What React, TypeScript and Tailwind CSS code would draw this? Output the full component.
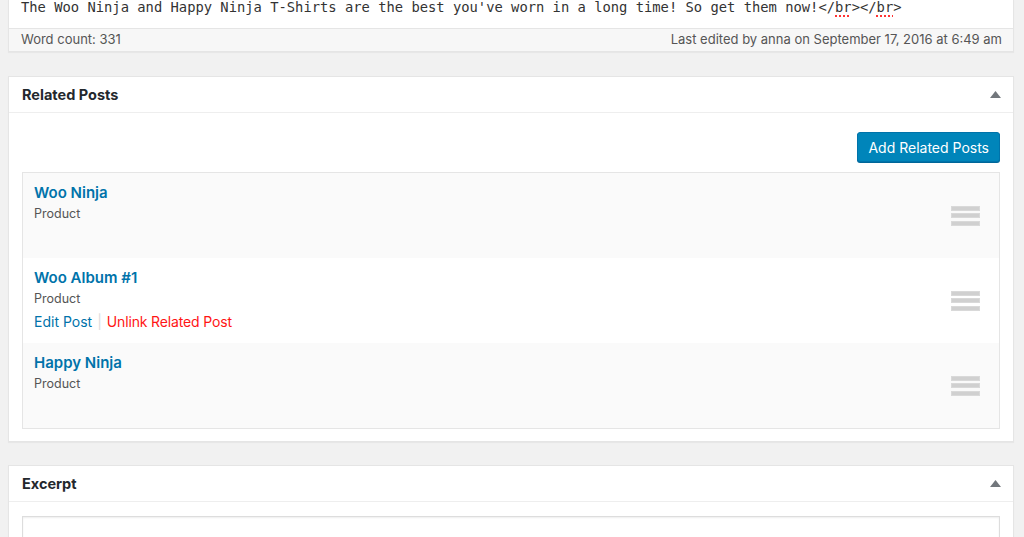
const sans = "font-['Inter','Noto_Sans',sans-serif]";

type Related = { title: string; type: string; actions?: boolean; shaded: boolean };

const posts: Related[] = [
  { title: "Woo Ninja", type: "Product", shaded: true },
  { title: "Woo Album #1", type: "Product", actions: true, shaded: false },
  { title: "Happy Ninja", type: "Product", shaded: true },
];

function Toggle() {
  return (
    <svg width="11" height="7" viewBox="0 0 11 7" className="text-[#72777c]">
      <path d="M0 7 L5.5 0 L11 7 Z" fill="currentColor" />
    </svg>
  );
}

function DragHandle() {
  return (
    <div className="flex w-[29px] flex-col gap-[2.5px]">
      <div className="h-[5px] border border-[#d9d9d9] bg-[#d0d0d0]" />
      <div className="h-[5px] border border-[#d9d9d9] bg-[#d0d0d0]" />
      <div className="h-[5px] border border-[#d9d9d9] bg-[#d0d0d0]" />
    </div>
  );
}

function BoxHeader({ title }: { title: string }) {
  return (
    <div className="flex h-[36px] items-center justify-between border-b border-[#eeeeee] pl-[13px] pr-[12px]">
      <h2 className="text-[14.5px] font-bold text-[#23282d]">{title}</h2>
      <Toggle />
    </div>
  );
}

export default function App() {
  return (
    <div className={`min-h-screen bg-[#f1f1f1] pl-[8px] pr-[10px] ${sans}`}>
      {/* Editor tail */}
      <div className="border-x border-b border-[#e5e5e5] bg-white shadow-[0_1px_1px_rgba(0,0,0,0.04)]">
        <div className="h-[28px] pl-[12px] font-['DejaVu_Sans_Mono',monospace] text-[13.8px] leading-[15px] text-[#333]">
          The Woo Ninja and Happy Ninja T-Shirts are the best you've worn in a long time! So get them now!&lt;/
          <span className="underline decoration-[#f33] decoration-dotted decoration-2 underline-offset-[3px]">br</span>
          &gt;&lt;/
          <span className="underline decoration-[#f33] decoration-dotted decoration-2 underline-offset-[3px]">br</span>
          &gt;
        </div>
        <div className="flex h-[23px] items-center justify-between border-t border-[#e5e5e5] bg-[#f7f7f7] pl-[12px] pr-[11px] text-[13px] text-[#555]">
          <span>Word count: 331</span>
          <span>Last edited by anna on September 17, 2016 at 6:49 am</span>
        </div>
      </div>

      {/* Related Posts */}
      <div className="mt-[24px] border border-[#e5e5e5] bg-white shadow-[0_1px_1px_rgba(0,0,0,0.04)]">
        <BoxHeader title="Related Posts" />
        <div className="px-[13px] pt-[19px] pb-[12px]">
          <div className="flex justify-end">
            <button className="h-[30px] rounded-[3px] border border-[#0073aa] bg-[#0085ba] px-[10px] text-[14px] text-white shadow-[0_1px_0_#006799]">
              Add Related Posts
            </button>
          </div>
          <div className="mt-[10px] border border-[#e5e5e5]">
            {posts.map((p) => (
              <div
                key={p.title}
                className={`flex h-[85px] items-center justify-between pl-[11px] pr-[19px] ${p.shaded ? "bg-[#fafafa]" : "bg-white"}`}
              >
                <div className="self-start pt-[9px]">
                  <div className="text-[15px] font-semibold leading-[22px] text-[#0073aa]">{p.title}</div>
                  <div className="text-[12.5px] leading-[20px] text-[#555]">{p.type}</div>
                  {p.actions && (
                    <div className="mt-[3px] flex items-center text-[14px] leading-[20px]">
                      <span className="text-[#0073aa]">Edit Post</span>
                      <span className="mx-[5px] text-[#ddd]">|</span>
                      <span className="tracking-[-0.15px] text-[#ff1515]">Unlink Related Post</span>
                    </div>
                  )}
                </div>
                <DragHandle />
              </div>
            ))}
          </div>
        </div>
      </div>

      {/* Excerpt */}
      <div className="mt-[23px] border border-[#e5e5e5] bg-white shadow-[0_1px_1px_rgba(0,0,0,0.04)]">
        <BoxHeader title="Excerpt" />
        <div className="px-[13px] pt-[14px]">
          <div className="h-[80px] border border-[#dddddd] shadow-[inset_0_1px_2px_rgba(0,0,0,0.07)]" />
        </div>
      </div>
    </div>
  );
}
